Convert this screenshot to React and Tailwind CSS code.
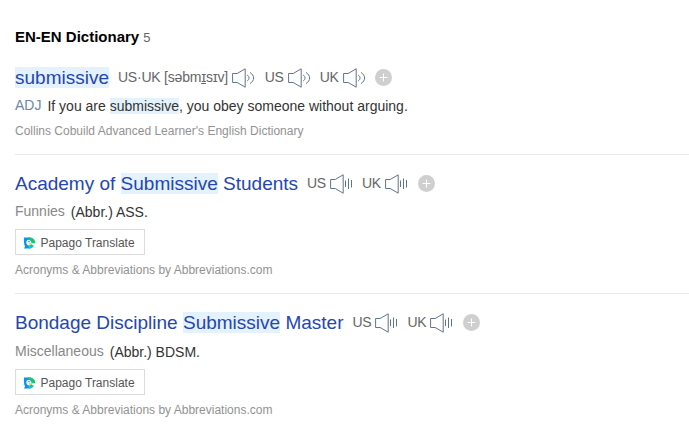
import React from "react";

function Speaker({ human }) {
  return (
    <svg width="23" height="20" viewBox="0 0 23 20" fill="none" stroke="#62738c" strokeWidth="1" className="relative top-px ml-[5px] shrink-0">
      <path d="M.6 5.5H5.2L13.2.8V19.2L5.2 14.5H.6Z" />
      {human ? (
        <path d="M15.3 7.2C17.6 8.4 17.6 11.6 15.3 12.8M18 4.5C22.8 7.2 22.8 12.8 18 15.5" />
      ) : (
        <path d="M15.5 6.5V13M18.5 4.5V15M21.5 6V13.5" />
      )}
    </svg>
  );
}

function Plus() {
  return (
    <svg width="17" height="17" viewBox="0 0 17 17" className="ml-[9.5px] shrink-0">
      <circle cx="8.5" cy="8.5" r="8.5" fill="#cfcfcf" />
      <path d="M4.5 8.5H12.5M8.5 4.5V12.5" stroke="#fff" />
    </svg>
  );
}

function Pronunciations({ human }) {
  return (
    <>
      <span className={`${human ? "ml-[9.7px]" : "ml-[9px]"} w-[18px] tracking-[-0.4px]`}>US</span>
      <Speaker human={human} />
      <span className="ml-[9px] w-[18px] tracking-[-0.4px]">UK</span>
      <Speaker human={human} />
      <Plus />
    </>
  );
}

function Mark({ children }) {
  return <span className="bg-[#e3f2fc]">{children}</span>;
}

function Papago() {
  return (
    <button className="mt-[8px] flex h-[26px] w-[130px] items-center border border-[#dcdcdc] pl-[7px] pt-px text-xs text-[#555]">
      <svg width="13" height="12" viewBox="0 0 13 12" className="mr-[4.5px] shrink-0">
        <path d="M1 .5H6.5C10 .5 12 3 12 6H7L10.5 9C9.5 11 7.5 11.5 6 11.5H1L2 9.5C.8 7 .8 3 1 .5Z" fill="#0795ef" />
        <path d="M4.5 .5H6.5C10 .5 12.2 3 12.3 6.2H9L7 2.8Z" fill="#1bc96b" />
        <path d="M5.5 2.8C3 3 2.6 6.5 4.5 8L6.7 9L8.6 6C8.2 4.5 7 2.8 5.5 2.8Z" fill="#e8faff" />
        <path d="M6 5.8L10 6.3L8.6 7.8L6 7.8Z" fill="#ffd43b" />
        <path d="M5 8.5L10.8 8.5C9.5 10.7 8 11.5 6 11.5Z" fill="#0ccbd0" />
        <circle cx="6" cy="4.6" r=".7" fill="#255d86" />
      </svg>
      <span>Papago Translate</span>
    </button>
  );
}

function TitleRow({ title, children }) {
  return (
    <div className="flex h-6 items-center text-sm text-[#666]">
      <h3 className="whitespace-pre text-[19px] leading-[21px] text-[#2546b0]">{title}</h3>
      {children}
    </div>
  );
}

function AbbreviationEntry({ title, category, meaning, last }) {
  return (
    <li className={last ? "pt-4" : "h-[139px] border-b border-[#ebebeb] pt-4"}>
      <TitleRow title={title}>
        <Pronunciations />
      </TitleRow>
      <p className={`${last ? "mt-[7px]" : "mt-[6px]"} flex h-5 items-center text-sm leading-5 text-[#333]`}>
        <span className="mr-[6px] text-[#888]">{category}</span>
        <span className="relative top-px">{meaning}</span>
      </p>
      <Papago />
      <p className="mt-[7px] text-xs leading-4 text-[#929292]">Acronyms &amp; Abbreviations by Abbreviations.com</p>
    </li>
  );
}

export default function App() {
  return (
    <main className="h-[447px] overflow-hidden whitespace-nowrap bg-white pl-[15px] pt-[27px] font-['Liberation_Sans',Arial,sans-serif]">
      <h2 className="flex h-5 items-center text-[15px] font-bold text-black">
        EN-EN Dictionary
        <span className="relative top-px ml-[4px] text-[13px] font-normal text-[#666]">5</span>
      </h2>
      <ul>
        <li className="h-[108px] border-b border-[#ebebeb] pt-[18px]">
          <TitleRow title={<Mark>submissive</Mark>}>
            <span className="ml-[9px] w-[109px] tracking-[-0.22px]">US·UK [səbm<u>ɪ</u>sɪv]</span>
            <Speaker human />
            <Pronunciations human />
          </TitleRow>
          <p className="mt-[6px] flex h-5 items-center text-sm leading-5 text-[#333]">
            <span className="mr-[6px] text-[#7185a5]">ADJ</span>
            <span className="relative top-px">
              If you are <Mark>submissive</Mark>, you obey someone without arguing.
            </span>
          </p>
          <p className="mt-[8px] text-xs leading-4 text-[#929292]">
            Collins Cobuild Advanced Learner's English Dictionary
          </p>
        </li>
        <AbbreviationEntry
          title={<>Academy of <Mark>Submissive</Mark> Students</>}
          category="Funnies"
          meaning="(Abbr.) ASS."
        />
        <AbbreviationEntry
          title={<>Bondage Discipline <Mark>Submissive</Mark> Master</>}
          category="Miscellaneous"
          meaning="(Abbr.) BDSM."
          last
        />
      </ul>
    </main>
  );
}
